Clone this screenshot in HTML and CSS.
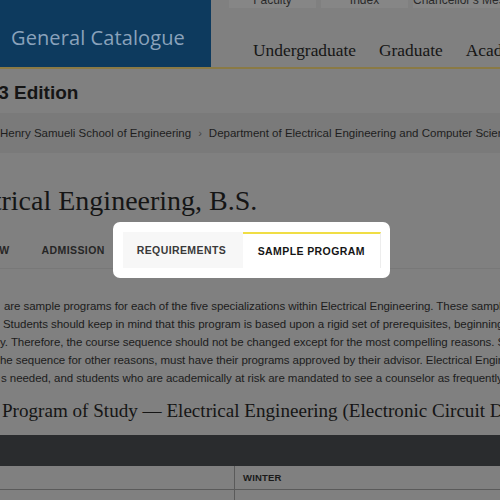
FILE: index.html
```html
<!DOCTYPE html>
<html>
<head>
<meta charset="utf-8">
<link rel="stylesheet" href="styles.css">
</head>
<body>
<div class="page">
  <header class="topbar">
    <div class="brand"><span class="brand-text">General Catalogue</span></div>
    <div class="navside">
      <div class="utility">
        <span class="util-tab">Faculty</span>
        <span class="util-tab">Index</span>
        <span class="util-tab">Chancellor's Message</span>
      </div>
      <nav class="mainnav">
        <span>Undergraduate</span>
        <span>Graduate</span>
        <span>Academic Information</span>
      </nav>
    </div>
  </header>
  <div class="edition">2022-23 Edition</div>
  <div class="crumbs"><span>The Henry Samueli School of Engineering</span><span class="sep">›</span><span>Department of Electrical Engineering and Computer Science</span></div>
  <h1 class="title">Electrical Engineering, B.S.</h1>
  <div class="tabs">
    <span class="tab">OVERVIEW</span>
    <span class="tab">ADMISSION</span>
    <div class="spot">
      <span class="tab req">REQUIREMENTS</span>
      <span class="tab active">SAMPLE PROGRAM</span>
    </div>
  </div>
  <div class="para">
    <div class="line l1">are sample programs for each of the five specializations within Electrical Engineering. These sample</div>
    <div class="line l2">Students should keep in mind that this program is based upon a rigid set of prerequisites, beginning</div>
    <div class="line l3">y. Therefore, the course sequence should not be changed except for the most compelling reasons. S</div>
    <div class="line l4">he sequence for other reasons, must have their programs approved by their advisor. Electrical Engine</div>
    <div class="line l5">s needed, and students who are academically at risk are mandated to see a counselor as frequently</div>
  </div>
  <h2 class="study">Program of Study — Electrical Engineering (Electronic Circuit Design)</h2>
  <div class="darkbar"></div>
  <div class="table-row">
    <div class="cell first"></div>
    <div class="cell">WINTER</div>
  </div>
  <div class="table-row next">
    <div class="cell first"></div>
    <div class="cell"></div>
  </div>
</div>
</body>
</html>
```
FILE: styles.css
```css
html, body {
  margin: 0;
  padding: 0;
}
body {
  background: #808080;
  width: 500px;
  height: 500px;
  overflow: hidden;
  font-family: "Liberation Sans", Arial, sans-serif;
}
.page {
  width: 500px;
  overflow: hidden;
}
.topbar {
  display: flex;
  height: 67px;
  border-bottom: 2px solid #8a7a45;
}
.brand {
  width: 211px;
  flex: none;
  background: #0d3a5e;
  display: flex;
  align-items: center;
  padding-left: 11px;
  box-sizing: border-box;
  padding-top: 7px;
}
.brand-text {
  font-family: "Open Sans", sans-serif;
  font-size: 20px;
  color: #8aa2bb;
  letter-spacing: 0.1px;
}
.navside {
  flex: 1;
  display: flex;
  flex-direction: column;
  overflow: hidden;
}
.utility {
  display: flex;
  gap: 5px;
  padding-left: 18px;
  height: 8px;
  overflow: hidden;
}
.util-tab {
  flex: none;
  width: 87px;
  height: 8px;
  background: #868686;
  color: #2a2a2a;
  font-size: 12px;
  line-height: 0;
  text-align: center;
  white-space: nowrap;
  overflow: hidden;
}
.mainnav {
  display: flex;
  gap: 23px;
  padding-left: 42px;
  padding-top: 32px;
  font-family: "Liberation Serif", "Times New Roman", serif;
  font-size: 17.4px;
  color: #161616;
  white-space: nowrap;
}
.edition {
  margin-left: -61px;
  margin-top: 13px;
  height: 22px;
  font-size: 19px;
  font-weight: bold;
  color: #151515;
  white-space: nowrap;
}
.crumbs {
  margin-top: 9px;
  height: 40px;
  background: #7a7a7a;
  display: flex;
  align-items: center;
  gap: 7px;
  margin-left: -23px;
  font-size: 11.5px;
  color: #1e1e1e;
  white-space: nowrap;
}
.crumbs .sep {
  color: #444;
  font-size: 11px;
}
.title {
  margin: 30px 0 0 -56px;
  height: 36px;
  font-family: "Liberation Serif", "Times New Roman", serif;
  font-weight: normal;
  font-size: 28px;
  line-height: 36px;
  color: #151515;
  white-space: nowrap;
}
.tabs {
  margin-top: 13px;
  display: flex;
  align-items: center;
  height: 36px;
  margin-left: -50px;
  border-bottom: 1px solid #787878;
}
.tab {
  font-size: 10.5px;
  font-weight: bold;
  letter-spacing: 0.4px;
  color: #262626;
  white-space: nowrap;
}
.tab + .tab {
  margin-left: 32px;
}
.spot {
  margin-left: 8px;
  background: #ffffff;
  border-radius: 7px;
  padding: 10px 9px 10px 10px;
  display: flex;
  align-self: flex-start;
  margin-top: -10px;
}
.spot .tab {
  height: 36px;
  display: flex;
  align-items: center;
  box-sizing: border-box;
  margin-left: 0;
}
.req {
  background: #f7f7f7;
  padding: 0 14px;
  color: #3a3a3a;
  width: 120px;
}
.active {
  background: #ffffff;
  border-top: 2px solid #f0de45;
  border-right: 1px solid #ededed;
  padding: 0 15px;
  color: #151515;
  width: 138px;
}
.para {
  margin-top: 28px;
  font-size: 11.5px;
  line-height: 18px;
  letter-spacing: -0.06px;
  color: #1c1c1c;
}
.line {
  white-space: nowrap;
  overflow: hidden;
}
.l1 { padding-left: 4px; }
.l2 { padding-left: 3px; }
.l5 { padding-left: 1px; }
.study {
  margin: 11px 0 0 2px;
  height: 26px;
  font-family: "Liberation Serif", "Times New Roman", serif;
  font-weight: normal;
  font-size: 19.1px;
  line-height: 26px;
  color: #151515;
  white-space: nowrap;
}
.darkbar {
  margin-top: 11px;
  height: 31px;
  background: #2a2c2e;
}
.table-row {
  display: flex;
  height: 23px;
  border-bottom: 1px solid #5a5a5a;
}
.table-row.next {
  border-bottom: none;
}
.cell {
  display: flex;
  align-items: center;
  padding-left: 8px;
  font-size: 9.5px;
  font-weight: bold;
  color: #1a1a1a;
  letter-spacing: 0.2px;
}
.cell.first {
  width: 234px;
  padding: 0;
  border-right: 1px solid #5a5a5a;
}
```
